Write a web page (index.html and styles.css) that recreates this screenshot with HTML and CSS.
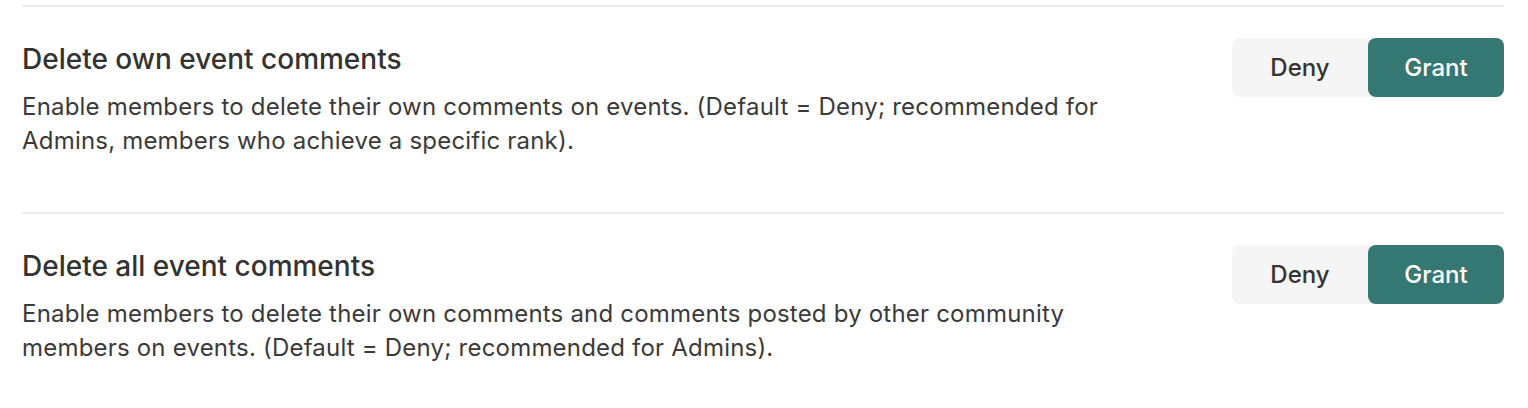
FILE: index.html
```html
<!DOCTYPE html>
<html lang="en">
<head>
<meta charset="utf-8">
<link rel="stylesheet" href="styles.css">
</head>
<body>
<div class="list">
  <section class="perm">
    <div class="info">
      <h3 class="title">Delete own event comments</h3>
      <p class="desc">Enable members to delete their own comments on events. (Default = Deny; recommended for Admins, members who achieve a specific rank).</p>
    </div>
    <div class="toggle">
      <button class="opt">Deny</button>
      <button class="opt active">Grant</button>
    </div>
  </section>
  <section class="perm">
    <div class="info">
      <h3 class="title">Delete all event comments</h3>
      <p class="desc">Enable members to delete their own comments and comments posted by other community members on events. (Default = Deny; recommended for Admins).</p>
    </div>
    <div class="toggle">
      <button class="opt">Deny</button>
      <button class="opt active">Grant</button>
    </div>
  </section>
</div>
</body>
</html>
```
FILE: styles.css
```css
* { box-sizing: border-box; }
html, body { margin: 0; padding: 0; background: #fff; }
body { font-family: Inter, "Noto Sans", sans-serif; color: #333; }
.list { padding: 5px 24px 0 22px; }
.perm {
  display: flex;
  justify-content: space-between;
  align-items: flex-start;
  border-top: 2px solid #ebebeb;
  padding: 31px 0 40px;
  height: 207px;
}
.info { max-width: 1120px; padding-top: 3px; }
.title { margin: 0 0 13px; font-size: 28px; font-weight: 500; line-height: 36px; color: #333; }
.desc { margin: 0; font-size: 24px; line-height: 34px; letter-spacing: 0.2px; color: #3a3a3a; }
.toggle { display: flex; background: #f5f5f5; border-radius: 8px; width: 272px; height: 59px; }
.opt {
  flex: 1;
  border: 0;
  background: transparent;
  border-radius: 8px;
  font-family: inherit;
  font-size: 24px;
  font-weight: 500;
  color: #333;
  padding: 0;
}
.opt.active { background: #357873; color: #fff; }
```
